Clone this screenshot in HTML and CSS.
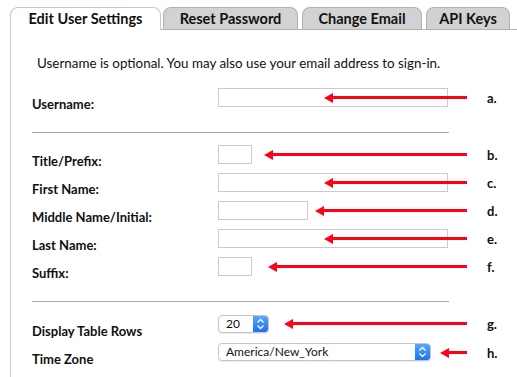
FILE: index.html
```html
<!DOCTYPE html>
<html lang="en">
<head>
  <meta charset="UTF-8">
  <title>Edit User Settings</title>
  <link rel="stylesheet" href="styles.css">
</head>
<body>
<div class="page">
  <div class="tabs">
    <div class="tab active settings-tab">Edit User Settings</div>
    <div class="tab password-tab">Reset Password</div>
    <div class="tab email-tab">Change Email</div>
    <div class="tab keys-tab">API Keys</div>
  </div>
  <div class="panel">
    <p class="intro">Username is optional. You may also use your email address to sign-in.</p>
    <form class="settings">
      <div class="field">
        <label>Username:</label>
        <input type="text" class="wide">
        <div class="note note-a"><span class="head"></span><span class="shaft"></span><span class="letter">a.</span></div>
      </div>
      <hr>
      <div class="field">
        <label>Title/Prefix:</label>
        <input type="text" class="tiny">
        <div class="note note-b"><span class="head"></span><span class="shaft"></span><span class="letter">b.</span></div>
      </div>
      <div class="field">
        <label>First Name:</label>
        <input type="text" class="wide">
        <div class="note note-c"><span class="head"></span><span class="shaft"></span><span class="letter">c.</span></div>
      </div>
      <div class="field">
        <label>Middle Name/Initial:</label>
        <input type="text" class="mid">
        <div class="note note-d"><span class="head"></span><span class="shaft"></span><span class="letter">d.</span></div>
      </div>
      <div class="field">
        <label>Last Name:</label>
        <input type="text" class="wide">
        <div class="note note-e"><span class="head"></span><span class="shaft"></span><span class="letter">e.</span></div>
      </div>
      <div class="field">
        <label>Suffix:</label>
        <input type="text" class="tiny">
        <div class="note note-f"><span class="head"></span><span class="shaft"></span><span class="letter">f.</span></div>
      </div>
      <hr class="second">
      <div class="field">
        <label>Display Table Rows</label>
        <div class="select rows">
          <span class="value">20</span>
          <span class="stepper"><svg width="9" height="12" viewBox="0 0 9 12"><path d="M1.5 4.5 L4.5 1.5 L7.5 4.5 M1.5 7.5 L4.5 10.5 L7.5 7.5" fill="none" stroke="#fff" stroke-width="1.3"/></svg></span>
        </div>
        <div class="note note-g"><span class="head"></span><span class="shaft"></span><span class="letter">g.</span></div>
      </div>
      <div class="field">
        <label>Time Zone</label>
        <div class="select zone">
          <span class="value">America/New_York</span>
          <span class="stepper"><svg width="9" height="12" viewBox="0 0 9 12"><path d="M1.5 4.5 L4.5 1.5 L7.5 4.5 M1.5 7.5 L4.5 10.5 L7.5 7.5" fill="none" stroke="#fff" stroke-width="1.3"/></svg></span>
        </div>
        <div class="note note-h"><span class="head"></span><span class="shaft"></span><span class="letter">h.</span></div>
      </div>
    </form>
  </div>
</div>
</body>
</html>
```

FILE: styles.css
```css
body {
  margin: 0;
  background: #fff;
  color: #111;
  font-family: 'Lato', 'Open Sans', sans-serif;
  overflow: hidden;
}
.page {
  padding: 7px 0 0 10px;
}
.tabs {
  display: flex;
  height: 22px;
  position: relative;
  z-index: 1;
}
.tab {
  box-sizing: border-box;
  height: 22px;
  background: #d2d2d2;
  border: 1px solid #b2b2b2;
  border-bottom: none;
  border-radius: 8px 8px 0 0;
  font-size: 14.5px;
  font-weight: bold;
  line-height: 21px;
  text-align: center;
}
.tab.active {
  height: 23px;
  background: #fff;
  border-color: #c8c8c8;
}
.settings-tab { width: 151px; }
.password-tab { width: 135px; margin-left: 2px; }
.email-tab { width: 120px; margin-left: 4px; }
.keys-tab { width: 84px; margin-left: 4px; }
.panel {
  border-top: 1px solid #b2b2b2;
  border-left: 1px solid #c8c8c8;
  padding: 25px 0 10px 21px;
}
.intro {
  margin: 0 0 17px 5px;
  font-size: 13.4px;
  line-height: 16px;
}
.settings hr {
  border: none;
  border-top: 1px solid #a6a6a6;
  width: 417px;
  margin: 16px 0 12px 0;
}
.settings hr.second {
  margin-bottom: 13px;
}
.field {
  position: relative;
  display: flex;
  align-items: flex-start;
  height: 28px;
}
.field label {
  width: 186px;
  padding-top: 9px;
  font-size: 13px;
  font-weight: bold;
  line-height: 14px;
}
.field input {
  box-sizing: border-box;
  height: 19px;
  margin: 0;
  border: 1px solid #cbcbcb;
  padding: 0 4px;
  background: #fff;
}
.wide { width: 230px; }
.mid { width: 90px; }
.tiny { width: 34px; }
.select {
  box-sizing: border-box;
  display: flex;
  height: 18px;
  border: 1px solid #c6c6c6;
  border-radius: 4px;
  background: #fff;
  box-shadow: 0 1px 1px rgba(0,0,0,0.08);
  overflow: hidden;
}
.select.rows { width: 51px; }
.select.zone { width: 213px; }
.select .value {
  flex: 1;
  padding-left: 7px;
  font-size: 12px;
  line-height: 16px;
}
.stepper {
  width: 15px;
  display: flex;
  align-items: center;
  justify-content: center;
  background: linear-gradient(#5aa6fb, #1b72f0);
}
.note {
  position: absolute;
  top: 0;
  right: 0;
  height: 19px;
  display: flex;
  align-items: center;
}
.note .head {
  width: 0;
  height: 0;
  border-top: 5px solid transparent;
  border-bottom: 5px solid transparent;
  border-right: 9px solid #ff0015;
}
.note .shaft {
  flex: 1;
  height: 3px;
  background: #ff0015;
}
.note .letter {
  width: 30px;
  padding-left: 20px;
  font-size: 13px;
  font-weight: bold;
}
.note-a, .note-c, .note-e { left: 292px; }
.note-b { left: 232px; }
.note-d { left: 283px; }
.note-f { left: 236px; }
.note-g { left: 252px; top: -1px; }
.note-h { left: 408px; top: 0; }
```
